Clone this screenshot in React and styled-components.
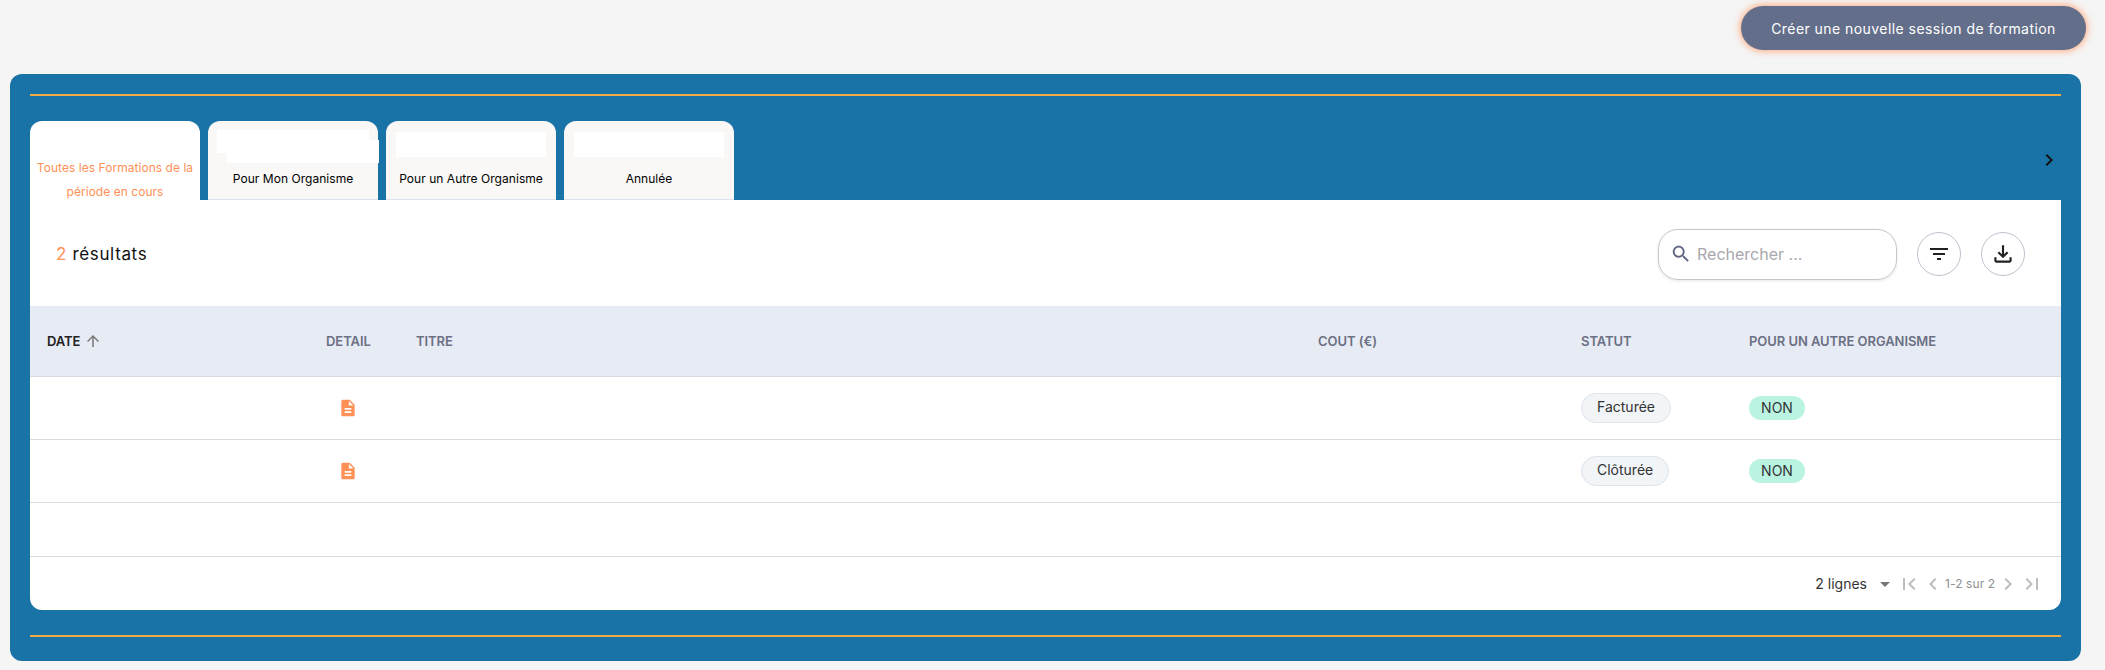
import React from 'react';
import styled, { createGlobalStyle } from 'styled-components';

const GlobalStyle = createGlobalStyle`
  html, body {
    margin: 0;
    background: #f5f5f5;
    font-family: 'Inter', 'Liberation Sans', sans-serif;
  }
`;

const paths = {
  search:
    'M15.5 14h-.79l-.28-.27C15.41 12.59 16 11.11 16 9.5 16 5.91 13.09 3 9.5 3S3 5.91 3 9.5 5.91 16 9.5 16c1.61 0 3.09-.59 4.23-1.57l.27.28v.79l5 4.99L20.49 19l-4.99-5zm-6 0C7.01 14 5 11.99 5 9.5S7.01 5 9.5 5 14 7.01 14 9.5 11.99 14 9.5 14z',
  filter: 'M10 18h4v-2h-4v2zM3 6v2h18V6H3zm3 7h12v-2H6v2z',
  download:
    'M18 15v3H6v-3H4v3c0 1.1.9 2 2 2h12c1.1 0 2-.9 2-2v-3h-2zm-1-4l-1.41-1.41L13 12.17V4h-2v8.17L8.41 9.59 7 11l5 5 5-5z',
  doc: 'M14 2H6c-1.1 0-1.99.9-1.99 2L4 20c0 1.1.89 2 1.99 2H18c1.1 0 2-.9 2-2V8l-6-6zm2 16H8v-2h8v2zm0-4H8v-2h8v2zm-3-5V3.5L18.5 9H13z',
  up: 'M4 12l1.41 1.41L11 7.83V20h2V7.83l5.58 5.59L20 12l-8-8-8 8z',
  right: 'M10 6L8.59 7.41 13.17 12l-4.58 4.59L10 18l6-6z',
  left: 'M15.41 7.41L14 6l-6 6 6 6 1.41-1.41L10.83 12z',
  first: 'M18.41 16.59L13.82 12l4.59-4.59L17 6l-6 6 6 6zM6 6h2v12H6z',
  last: 'M5.59 7.41L10.18 12l-4.59 4.59L7 18l6-6-6-6zM16 6h2v12h-2z',
  drop: 'M7 10l5 5 5-5z',
};

const Svg = styled.svg`
  flex: none;
  display: block;
  width: ${(props) => props.$size || 24}px;
  height: ${(props) => props.$size || 24}px;
  fill: ${(props) => props.$color || '#222'};
`;

const Icon = ({ name, size, color }) => (
  <Svg viewBox="0 0 24 24" $size={size} $color={color}>
    <path d={paths[name]} />
  </Svg>
);

const Page = styled.div`
  width: 2105px;
  height: 670px;
  overflow: hidden;
`;

const TopBar = styled.div`
  height: 74px;
  box-sizing: border-box;
  padding: 6px 19px 0 0;
  display: flex;
  justify-content: flex-end;
  align-items: flex-start;
`;

const CreateButton = styled.button`
  width: 345px;
  height: 44px;
  border: 0;
  border-radius: 22px;
  background: #636f8a;
  color: #fff;
  font: 400 14px 'Inter', 'Liberation Sans', sans-serif;
  letter-spacing: 0.44px;
  box-shadow: 0 0 7px 1px rgba(255, 140, 80, 0.75);
`;

const Panel = styled.section`
  width: 2071px;
  height: 587px;
  margin-left: 10px;
  box-sizing: border-box;
  padding: 20px 20px 0;
  background: #1a73a7;
  border-radius: 12px;
`;

const Rule = styled.div`
  height: 2px;
  margin-top: ${(props) => (props.$bottom ? 25 : 0)}px;
  background: #f0ab45;
`;

const TabBar = styled.div`
  height: 79px;
  margin-top: 25px;
  display: flex;
  gap: 8px;
  position: relative;
`;

const Tab = styled.div`
  width: 170px;
  height: 79px;
  box-sizing: border-box;
  padding-top: 11px;
  border-radius: 12px 12px 0 0;
  background: ${(props) => (props.$active ? '#fff' : '#faf8f6')};
  border-bottom: ${(props) => (props.$active ? '0' : '1px solid #dde3ec')};
  position: relative;
  text-align: center;
  font-size: 12px;
  font-weight: 400;
  letter-spacing: 0.04px;
  line-height: 24px;
  color: ${(props) => (props.$active ? '#ff9157' : '#000')};
`;

const TabBlank = styled.div`
  height: 25px;
  margin: 0 10px 10px;
  background: #fff;
  position: relative;

  ${(props) =>
    props.$stepped &&
    `
    width: 152px;
    height: 23px;
    margin: -2px 0 14px 9px;
    &::after {
      content: '';
      position: absolute;
      left: 10px;
      top: 10px;
      width: 152px;
      height: 23px;
      background: #fff;
    }
  `}
`;

const TabLabel = styled.div`
  position: relative;
  ${(props) => props.$active && 'margin-top: -11px; padding: 0 4px;'}
`;

const ScrollArrow = styled.div`
  position: absolute;
  right: 0;
  top: 27px;
`;

const Card = styled.div`
  height: 410px;
  background: #fff;
  border-radius: 0 0 12px 12px;
  display: flex;
  flex-direction: column;
`;

const Toolbar = styled.div`
  height: 106px;
  flex: none;
  box-sizing: border-box;
  padding: 2px 36px 0 26px;
  display: flex;
  align-items: center;
`;

const ResultCount = styled.div`
  flex: 1;
  font-size: 17px;
  font-weight: 400;
  letter-spacing: 0.65px;
  color: #111;

  span {
    color: #ff9157;
  }
`;

const SearchBox = styled.div`
  width: 239px;
  height: 51px;
  box-sizing: border-box;
  padding-left: 11px;
  margin-right: 20px;
  display: flex;
  align-items: center;
  gap: 5px;
  border: 1px solid #c6c6cc;
  border-radius: 20px;
  box-shadow: 0 1px 3px rgba(0, 0, 0, 0.1);
  font-size: 16px;
  color: #a8a8ac;
`;

const RoundButton = styled.div`
  width: 44px;
  height: 44px;
  box-sizing: border-box;
  margin-left: ${(props) => (props.$spaced ? 20 : 0)}px;
  display: flex;
  align-items: center;
  justify-content: center;
  border: 1px solid #c3c1cf;
  border-radius: 50%;
`;

const columns = '279px 90px 902px 263px 168px 1fr';

const HeadRow = styled.div`
  height: 71px;
  flex: none;
  box-sizing: border-box;
  padding-left: 17px;
  display: grid;
  grid-template-columns: ${columns};
  align-items: center;
  background: #e7ebf4;
  border-bottom: 1px solid #d9dce4;
`;

const HeadCell = styled.div`
  display: flex;
  align-items: center;
  gap: 4px;
  font-size: 13px;
  font-weight: 600;
  letter-spacing: -0.06px;
  color: ${(props) => (props.$sorted ? '#222' : '#6c7084')};
`;

const Row = styled.div`
  height: 63px;
  flex: none;
  box-sizing: border-box;
  padding-left: 17px;
  display: grid;
  grid-template-columns: ${columns};
  align-items: center;
  border-bottom: 1px solid #dcdcdc;
`;

const DocCell = styled.div`
  padding-left: 12px;
`;

const StatusChip = styled.span`
  display: inline-block;
  height: 30px;
  box-sizing: border-box;
  padding: 0 15px;
  border: 1px solid #dfe3ea;
  border-radius: 15px;
  background: #f2f5f8;
  font-size: 14px;
  line-height: 26px;
  color: #333;
`;

const YesNoChip = styled.span`
  display: inline-block;
  height: 24px;
  width: 56px;
  border-radius: 12px;
  background: #bbf3e3;
  text-align: center;
  font-size: 14px;
  line-height: 24px;
  color: #333;
`;

const EmptyRow = styled.div`
  height: 54px;
  flex: none;
  box-sizing: border-box;
  border-bottom: 1px solid #dcdcdc;
`;

const Pagination = styled.div`
  flex: 1;
  box-sizing: border-box;
  padding-right: 17px;
  display: flex;
  align-items: center;
  justify-content: flex-end;
`;

const Lines = styled.span`
  font-size: 14px;
  color: #333;
  margin-right: 6px;
`;

const PageInfo = styled.span`
  width: 51px;
  white-space: nowrap;
  font-size: 12px;
  letter-spacing: 0.1px;
  color: #8f8f8f;
`;

const rows = [
  { id: 1, status: 'Facturée' },
  { id: 2, status: 'Clôturée' },
];

const tabs = ['Pour Mon Organisme', 'Pour un Autre Organisme', 'Annulée'];

export default function App() {
  return (
    <Page>
      <GlobalStyle />
      <TopBar>
        <CreateButton>Créer une nouvelle session de formation</CreateButton>
      </TopBar>
      <Panel>
        <Rule />
        <TabBar>
          <Tab $active>
            <TabBlank />
            <TabLabel $active>Toutes les Formations de la période en cours</TabLabel>
          </Tab>
          {tabs.map((tab, i) => (
            <Tab key={tab}>
              <TabBlank $stepped={i === 0} />
              <TabLabel>{tab}</TabLabel>
            </Tab>
          ))}
          <ScrollArrow>
            <Icon name="right" size={24} color="#111" />
          </ScrollArrow>
        </TabBar>
        <Card>
          <Toolbar>
            <ResultCount>
              <span>2</span> résultats
            </ResultCount>
            <SearchBox>
              <Icon name="search" size={22} color="#5f6480" />
              Rechercher ...
            </SearchBox>
            <RoundButton>
              <Icon name="filter" />
            </RoundButton>
            <RoundButton $spaced>
              <Icon name="download" size={26} />
            </RoundButton>
          </Toolbar>
          <HeadRow>
            <HeadCell $sorted>
              DATE <Icon name="up" size={18} color="#777" />
            </HeadCell>
            <HeadCell>DETAIL</HeadCell>
            <HeadCell>TITRE</HeadCell>
            <HeadCell>COUT (€)</HeadCell>
            <HeadCell>STATUT</HeadCell>
            <HeadCell>POUR UN AUTRE ORGANISME</HeadCell>
          </HeadRow>
          {rows.map((row) => (
            <Row key={row.id}>
              <div />
              <DocCell>
                <Icon name="doc" size={20} color="#ff9157" />
              </DocCell>
              <div />
              <div />
              <div>
                <StatusChip>{row.status}</StatusChip>
              </div>
              <div>
                <YesNoChip>NON</YesNoChip>
              </div>
            </Row>
          ))}
          <EmptyRow />
          <Pagination>
            <Lines>2 lignes</Lines>
            <Icon name="drop" color="#777" />
            <Icon name="first" color="#bdbdbd" />
            <Icon name="left" color="#bdbdbd" />
            <PageInfo>1-2 sur 2</PageInfo>
            <Icon name="right" color="#bdbdbd" />
            <Icon name="last" color="#bdbdbd" />
          </Pagination>
        </Card>
        <Rule $bottom />
      </Panel>
    </Page>
  );
}
